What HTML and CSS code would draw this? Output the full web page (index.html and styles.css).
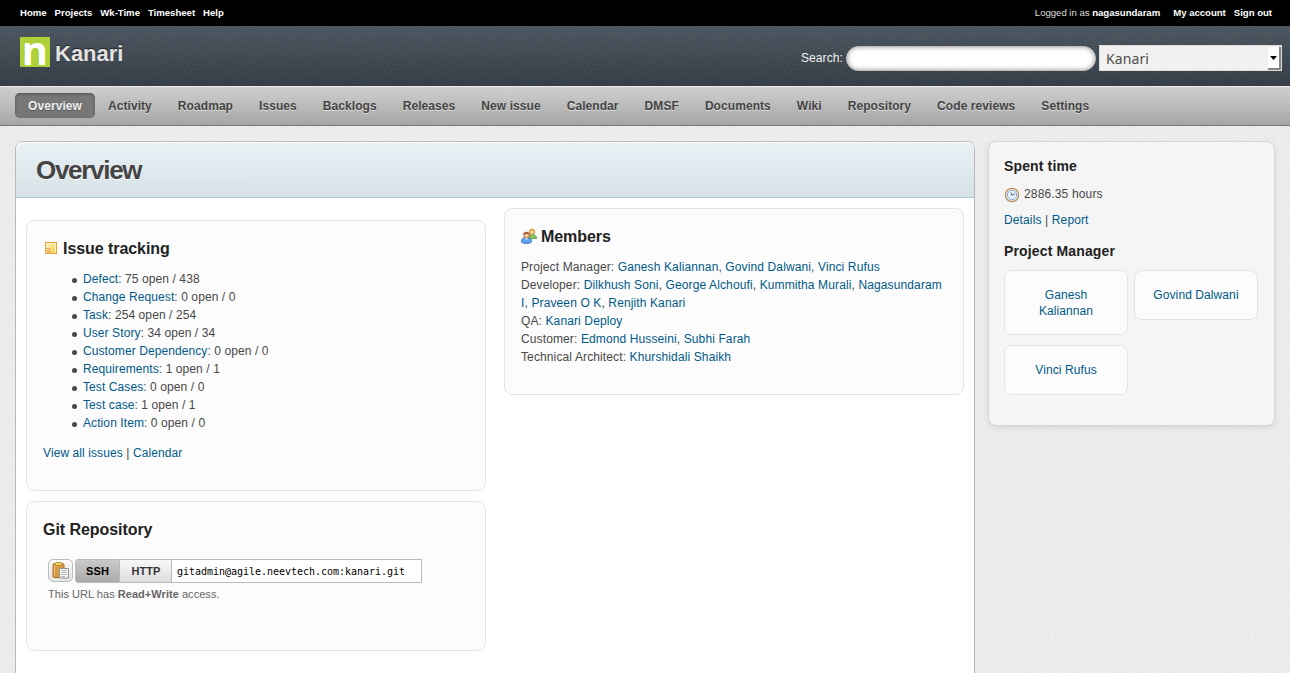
FILE: index.html
```html
<!DOCTYPE html>
<html lang="en">
<head>
<meta charset="utf-8">
<title>Kanari - Overview</title>
<link rel="stylesheet" href="styles.css">
</head>
<body>
<div class="top-menu">
  <nav class="top-links"><a href="#">Home</a><a href="#">Projects</a><a href="#">Wk-Time</a><a href="#">Timesheet</a><a href="#">Help</a></nav>
  <div class="account"><span class="logged">Logged in as <a href="#">nagasundaram</a></span><a href="#">My account</a><a href="#">Sign out</a></div>
</div>
<header class="header">
  <div class="brand"><span class="logo">n</span><h1>Kanari</h1></div>
  <div class="search">
    <label for="q">Search:</label>
    <input id="q" class="query" type="text">
    <div class="jump"><span>Kanari</span><span class="jump-button"><svg width="7" height="4" viewBox="0 0 7 4"><path d="M0 0h7L3.500 4z" fill="#000"/></svg></span></div>
  </div>
</header>
<nav class="main-menu">
  <a class="selected" href="#">Overview</a><a href="#">Activity</a><a href="#">Roadmap</a><a href="#">Issues</a><a href="#">Backlogs</a><a href="#">Releases</a><a href="#">New issue</a><a href="#">Calendar</a><a href="#">DMSF</a><a href="#">Documents</a><a href="#">Wiki</a><a href="#">Repository</a><a href="#">Code reviews</a><a href="#">Settings</a>
</nav>
<div class="page">
  <main class="content">
    <h2>Overview</h2>
    <div class="columns">
      <div class="left">
        <section class="box issues">
          <h3><svg class="ico-note" width="16" height="16" viewBox="0 0 16 16"><defs><linearGradient id="note" x2="1" y2="1"><stop offset="0" stop-color="#fff6cf"/><stop offset="1" stop-color="#f5cf3c"/></linearGradient></defs><rect x="2.500" y="2.500" width="11" height="11" fill="url(#note)" stroke="#e9a13b"/><path d="M3.500 12.500v-9h9v9" fill="none" stroke="#fff3cf"/><path d="M2.500 8.500h4.500v5h-4.500z" fill="#fbe0a0" stroke="#eda94a"/><path d="M4 10l3 3M4 12l1 1" stroke="#e0913a"/></svg>Issue tracking</h3>
          <ul>
            <li><a href="#">Defect</a>: 75 open / 438</li>
            <li><a href="#">Change Request</a>: 0 open / 0</li>
            <li><a href="#">Task</a>: 254 open / 254</li>
            <li><a href="#">User Story</a>: 34 open / 34</li>
            <li><a href="#">Customer Dependency</a>: 0 open / 0</li>
            <li><a href="#">Requirements</a>: 1 open / 1</li>
            <li><a href="#">Test Cases</a>: 0 open / 0</li>
            <li><a href="#">Test case</a>: 1 open / 1</li>
            <li><a href="#">Action Item</a>: 0 open / 0</li>
          </ul>
          <p><a href="#">View all issues</a> | <a href="#">Calendar</a></p>
        </section>
        <section class="box git">
          <h3>Git Repository</h3>
          <div class="clone">
            <span class="copy"><svg width="17" height="17" viewBox="0 0 17 17"><rect x="1" y="1.500" width="11" height="14" rx="1.500" fill="#d99a45" stroke="#a8692b"/><path d="M2.500 3v11" stroke="#efbd73"/><rect x="3.500" y=".5" width="6" height="3" rx="1" fill="#f1dc6d" stroke="#ad8a31"/><path d="M7.500 6.500h9v9.500h-9z" fill="#f6f6f6" stroke="#929292"/><path d="M9 8.500h6M9 10.500h6M9 12.500h6M9 14.500h4" stroke="#b4b4b4"/></svg></span>
            <span class="proto active">SSH</span><span class="proto">HTTP</span><span class="url">gitadmin@agile.neevtech.com:kanari.git</span>
          </div>
          <p class="access">This URL has <b>Read+Write</b> access.</p>
        </section>
      </div>
      <section class="box members">
        <h3><svg width="16" height="16" viewBox="0 0 16 16"><path d="M7.500 10.500c0-3 1-4 3.500-4s4.500 1 4.500 4z" fill="#83c957" stroke="#46983a" stroke-width=".8"/><circle cx="11" cy="3.800" r="2.800" fill="#f9d39a" stroke="#bd7b2f" stroke-width=".8"/><path d="M8 3.600C8.200.2 13.800.2 14 3.600 12.500 2 9.500 2 8 3.600z" fill="#e3a62d"/><path d="M.5 14c0-3.500 1.500-4.500 5-4.500s5 1 5 4.500c-1.500 2-8.500 2-10 0z" fill="#62a3ee" stroke="#2d69bd" stroke-width=".8"/><path d="M4 10l1.500 2L7 10z" fill="#fff"/><circle cx="5.500" cy="7" r="2.900" fill="#f8c79b" stroke="#a35f35" stroke-width=".8"/><path d="M2.400 7C2.500 3 8.500 3 8.600 7 7 5.500 4 5.500 2.400 7z" fill="#a35d34"/></svg>Members</h3>
        <p>Project Manager: <a href="#">Ganesh Kaliannan</a>, <a href="#">Govind Dalwani</a>, <a href="#">Vinci Rufus</a><br>
        Developer: <a href="#">Dilkhush Soni</a>, <a href="#">George Alchoufi</a>, <a href="#">Kummitha Murali</a>, <a href="#">Nagasundaram I</a>, <a href="#">Praveen O K</a>, <a href="#">Renjith Kanari</a><br>
        QA: <a href="#">Kanari Deploy</a><br>
        Customer: <a href="#">Edmond Husseini</a>, <a href="#">Subhi Farah</a><br>
        Technical Architect: <a href="#">Khurshidali Shaikh</a></p>
      </section>
    </div>
  </main>
  <aside class="sidebar">
    <h3>Spent time</h3>
    <p class="hours"><svg width="16" height="16" viewBox="0 0 16 16"><circle cx="8" cy="8" r="6.600" fill="#fff" stroke="#ae8a56" stroke-width="1.300"/><circle cx="8" cy="8" r="5.700" fill="none" stroke="#eee0c2" stroke-width=".8"/><circle cx="8" cy="8" r="4.700" fill="#e7f2ff" stroke="#7ea5da"/><path d="M7 5.500l1 3 2.800-1.800" fill="none" stroke="#555f70"/></svg>2886.35 hours</p>
    <p class="reports"><a href="#">Details</a> | <a href="#">Report</a></p>
    <h3>Project Manager</h3>
    <div class="managers"><a href="#">Ganesh Kaliannan</a><a href="#">Govind Dalwani</a><a href="#">Vinci Rufus</a></div>
  </aside>
</div>
</body>
</html>
```
FILE: styles.css
```css
* { box-sizing: border-box; }
html { height: 100%; overflow: hidden; }
body {
  margin: 0;
  height: 673px;
  overflow: hidden;
  display: flex;
  flex-direction: column;
  font: 12px/18px "Liberation Sans", Arial, sans-serif;
  letter-spacing: .09px;
  color: #484848;
  background: #eeeeee url("data:image/svg+xml,%3Csvg xmlns='http://www.w3.org/2000/svg' width='200' height='200'%3E%3Cfilter id='n'%3E%3CfeTurbulence type='fractalNoise' baseFrequency='.5' numOctaves='2' stitchTiles='stitch'/%3E%3CfeColorMatrix values='0 0 0 0 .45 0 0 0 0 .45 0 0 0 0 .45 .3 0 0 0 -.11'/%3E%3C/filter%3E%3Crect width='200' height='200' filter='url(%23n)'/%3E%3C/svg%3E");
}
a { color: #005a88; text-decoration: none; }
h1, h2, h3, p, ul { margin: 0; padding: 0; }

.top-menu {
  flex: none;
  height: 26px;
  padding: 0 18px 0 20px;
  display: flex;
  justify-content: space-between;
  background: #000;
  color: #ddd;
  font-size: 9.600px;
  line-height: 26px;
  letter-spacing: -.02px;
}
.top-menu a { color: #fff; font-weight: bold; }
.top-links, .account { display: flex; gap: 8px; }
.logged { margin-right: 5px; }

.header {
  flex: none;
  height: 60px;
  padding: 0 8px 0 20px;
  display: flex;
  justify-content: space-between;
  align-items: flex-start;
  color: #f0f0f0;
  background: url("data:image/svg+xml,%3Csvg xmlns='http://www.w3.org/2000/svg' width='200' height='200'%3E%3Cfilter id='n'%3E%3CfeTurbulence type='fractalNoise' baseFrequency='.55' numOctaves='2' stitchTiles='stitch'/%3E%3CfeColorMatrix values='0 0 0 0 .7 0 0 0 0 .75 0 0 0 0 .8 .14 0 0 0 -.05'/%3E%3C/filter%3E%3Crect width='200' height='200' filter='url(%23n)'/%3E%3C/svg%3E"), linear-gradient(#4b555f, #323b43);
}
.brand { display: flex; gap: 5px; padding-top: 11px; }
.logo {
  width: 30px;
  height: 30px;
  background: #add136;
  color: #fff;
  font: bold 40px/25px "Open Sans", sans-serif;
  letter-spacing: 0;
  text-align: center;
}
h1 { font-size: 22px; line-height: 33px; letter-spacing: 0; color: #e2e2e2; text-shadow: 0 -1px 1px #222; }
.search { display: flex; padding-top: 19px; }
.search label { line-height: 26px; margin-right: 3px; }
.query {
  width: 250px;
  height: 25px;
  margin: 1px 3px 0 0;
  padding: 0 12px;
  border: 1px solid #bbb;
  border-radius: 13px;
  background: #fff;
  box-shadow: inset 0 0 5px #999;
}
.jump {
  width: 183px;
  height: 26px;
  padding: 1px 0 0 6px;
  display: flex;
  justify-content: space-between;
  border: 1px solid #ddd;
  background: #f2f1f0;
  color: #4c4c4c;
  font: 14px/24px "Noto Sans", sans-serif;
}
.jump-button {
  width: 13px;
  height: 23px;
  display: flex;
  align-items: center;
  justify-content: center;
  background: #fcfcfc;
  border: solid #858585;
  border-width: 0 2px 2px 0;
}

.main-menu {
  flex: none;
  height: 40px;
  padding: 6px 15px 0;
  display: flex;
  border-top: 1px solid #eee;
  border-bottom: 1px solid #777;
  background: linear-gradient(#cfcfcf, #a6a6a6);
  letter-spacing: .07px;
}
.main-menu a {
  height: 25px;
  padding: 0 13px;
  border-radius: 5px;
  font-weight: bold;
  line-height: 26px;
  color: #444;
  text-shadow: 0 1px 0 #ddd;
}
.main-menu a.selected {
  background: #777;
  color: #eee;
  text-shadow: 0 1px 0 #555;
  box-shadow: inset 0 1px 3px #555;
}

.page { flex: 1; display: flex; gap: 13px; padding: 15px 15px 0; align-items: flex-start; }
.content {
  width: 960px;
  height: 560px;
  border: 1px solid #b8b8b8;
  border-radius: 8px 8px 0 0;
  background: #fff;
}
h2 {
  height: 56px;
  padding-left: 20px;
  border-bottom: 1px solid #adcbd7;
  border-radius: 7px 7px 0 0;
  background: linear-gradient(#e9f1f5, #d6e2e7);
  box-shadow: inset 0 1px 0 #fff;
  color: #444;
  font-size: 26px;
  line-height: 56px;
  letter-spacing: -1.300px;
  text-shadow: 0 1px 0 #fff;
}
.columns { display: flex; align-items: flex-start; gap: 18px; padding: 10px 10px 0; }
.left { padding-top: 12px; }
.box {
  width: 460px;
  padding: 18px 16px 0;
  border: 1px solid #e4e4e4;
  border-radius: 8px;
  background: #fcfcfc;
}
h3 { display: flex; align-items: center; color: #222; font-size: 16px; line-height: 20px; letter-spacing: -.06px; }
h3 svg { margin: -2px 4px 0 0; }
.issues { height: 271px; }
.issues ul { margin: 11px 0 12px 29px; list-style: none; }
.issues li { display: flex; white-space: pre; align-items: center; }
.issues li::before {
  content: "";
  width: 5px;
  height: 5px;
  margin: 2px 6px 0 0;
  border-radius: 50%;
  background: #484848;
}
.git { height: 150px; margin-top: 10px; }
.members { height: 187px; }
.members p { margin-top: 11px; letter-spacing: .12px; }

.clone { display: flex; margin: 19px 0 0 5px; height: 24px; }
.copy {
  width: 25px;
  height: 23px;
  margin-right: 2px;
  display: flex;
  align-items: center;
  justify-content: center;
  border: 1px solid #bbb;
  border-radius: 5px;
  background: linear-gradient(#fcfcfc, #e4e4e4);
}
.proto {
  width: 52px;
  border: solid #bbb;
  border-width: 1px 0;
  background: linear-gradient(#f8f8f8, #ddd);
  color: #333;
  font-weight: bold;
  font-size: 11px;
  line-height: 22px;
  text-align: center;
}
.proto.active {
  width: 45px;
  border-width: 1px;
  border-radius: 3px 0 0 3px;
  background: linear-gradient(#c9c9c9, #aaa);
  color: #000;
}
.url {
  width: 251px;
  margin-left: -1px;
  padding-left: 5px;
  border: 1px solid #bbb;
  background: #fff;
  color: #000;
  font: 10px/23px "DejaVu Sans Mono", monospace;
  letter-spacing: -.02px;
}
.access { margin: 2px 0 0 5px; color: #666; font-size: 11px; letter-spacing: .04px; }

.sidebar {
  width: 287px;
  height: 285px;
  padding: 15px 15px 0;
  border: 1px solid #d7d7d7;
  border-radius: 8px;
  background: #f5f5f5;
  box-shadow: 0 2px 5px #d5d5d5;
}
.sidebar h3 { font-size: 14px; line-height: 18px; letter-spacing: .14px; }
.hours { display: flex; margin-top: 10px; letter-spacing: .15px; }
.hours svg { margin: 2px 4px 0 0; }
.reports { margin: 8px 0 13px; letter-spacing: .13px; }
.managers { display: grid; grid-template-columns: 124px 124px; gap: 10px 6px; align-items: start; margin-top: 10px; }
.managers a {
  min-height: 50px;
  padding: 16px 15px 15px;
  border: 1px solid #e4e4e4;
  border-radius: 8px;
  background: #fcfcfc;
  line-height: 16px;
  text-align: center;
}
```
